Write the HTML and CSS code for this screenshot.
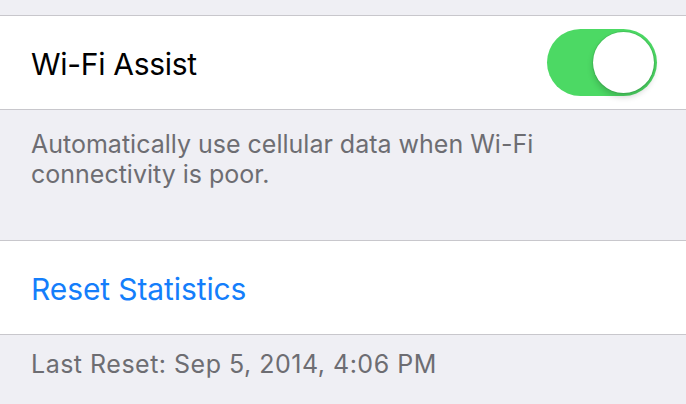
FILE: index.html
```html
<!DOCTYPE html>
<html lang="en">
<head>
    <meta charset="UTF-8">
    <meta name="viewport" content="width=device-width, initial-scale=1.0">
    <title>Cellular</title>
    <link rel="stylesheet" href="styles.css">
</head>
<body>
    <div class="group">
        <div class="cell">
            <span class="cell-label">Wi-Fi Assist</span>
            <label class="switch">
                <input type="checkbox" checked>
                <span class="slider"></span>
            </label>
        </div>
    </div>
    <p class="group-footer">Automatically use cellular data when Wi-Fi connectivity is poor.</p>

    <div class="group">
        <div class="cell">
            <span class="cell-label action">Reset Statistics</span>
        </div>
    </div>
    <p class="group-footer last-reset">Last Reset: Sep 5, 2014, 4:06 PM</p>
</body>
</html>
```

FILE: styles.css
```css
body {
    font-family: Inter, "Noto Sans", sans-serif;
    margin: 0;
    padding-top: 15px;
    background-color: #efeff4;
    color: #000;
}
.group {
    background-color: #fff;
    border-top: 1px solid #c8c7cc;
    border-bottom: 1px solid #c8c7cc;
}
.cell {
    display: flex;
    align-items: center;
    justify-content: space-between;
    min-height: 93px;
    padding: 0 29px 0 31px;
}
.cell-label {
    font-size: 30px;
    letter-spacing: -0.3px;
    padding-top: 3px;
}
.cell-label.action {
    color: #147efb;
    letter-spacing: -0.1px;
}
.group-footer {
    margin: 0;
    padding: 19px 120px 51px 31px;
    font-size: 25px;
    line-height: 30px;
    color: #6d6d72;
}
.group-footer.last-reset {
    padding-top: 14px;
    padding-bottom: 0;
    letter-spacing: 0.5px;
}
.switch {
    position: relative;
    display: inline-block;
    width: 110px;
    height: 67px;
}
.switch input {
    opacity: 0;
    width: 0;
    height: 0;
}
.slider {
    position: absolute;
    top: 0;
    left: 0;
    right: 0;
    bottom: 0;
    background-color: #e5e5ea;
    border-radius: 34px;
}
.slider:before {
    position: absolute;
    content: "";
    width: 61px;
    height: 61px;
    left: 3px;
    top: 3px;
    background-color: #fff;
    border-radius: 50%;
    box-shadow: 0 0 0 1px rgba(0, 0, 0, 0.08), 0 4px 6px rgba(0, 0, 0, 0.18);
}
input:checked + .slider {
    background-color: #4cd964;
}
input:checked + .slider:before {
    transform: translateX(43px);
}
```
